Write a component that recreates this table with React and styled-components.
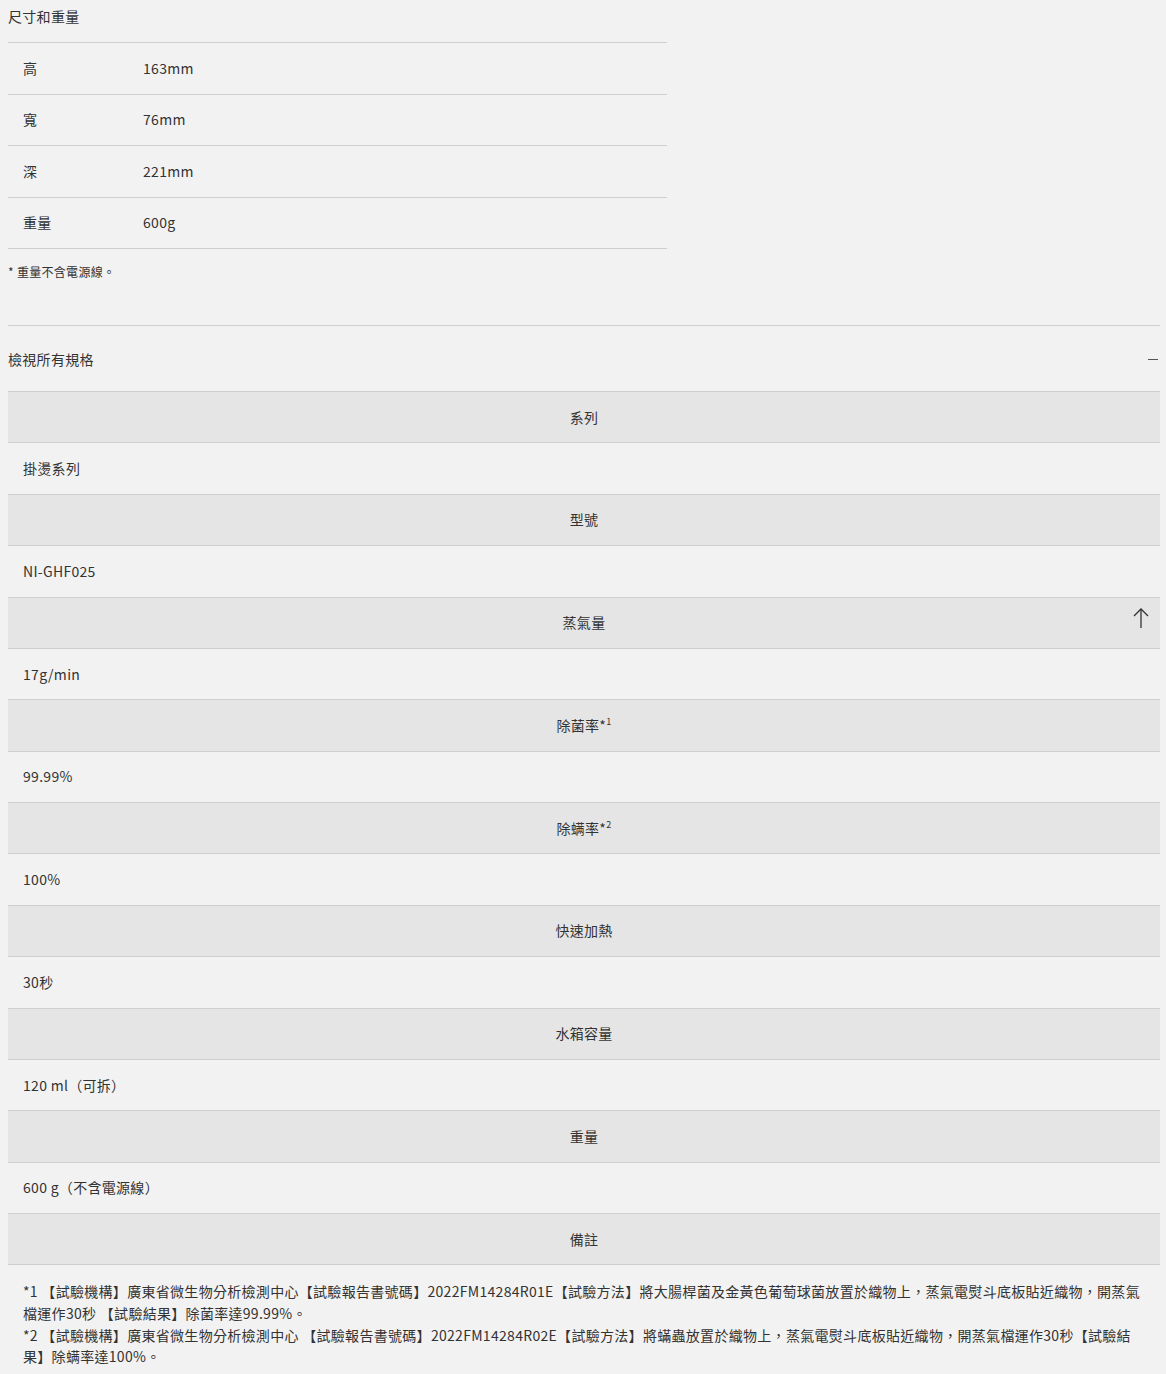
import styled, { createGlobalStyle } from "styled-components";

const GlobalStyle = createGlobalStyle`
  html, body {
    margin: 0;
    padding: 0;
    background: #f2f2f2;
  }
  body {
    font-family: "Noto Sans CJK TC", "Noto Sans", sans-serif;
    font-size: 14px;
    letter-spacing: 0.3px;
    color: #333;
  }
`;

const Page = styled.div`
  position: relative;
  width: 1152px;
  padding: 0 0 0 8px;
`;

const Title = styled.div`
  line-height: 21px;
  padding: 6px 0 15px;
  border-bottom: 1px solid #cfcfcf;
`;

const DimTable = styled.div`
  width: 659px;
`;

const DimRow = styled.div`
  display: grid;
  grid-template-columns: 120px 1fr;
  line-height: 21px;
  padding: 14.75px 15px;
  border-bottom: 1px solid #cfcfcf;
`;

const Note = styled.div`
  font-size: 12px;
  line-height: 18px;
  padding: 14px 0 44px;
  border-bottom: 1px solid #cfcfcf;
`;

const Toggle = styled.div`
  display: flex;
  justify-content: space-between;
  align-items: center;
  line-height: 21px;
  padding: 23px 0 21px;
  border-bottom: 1px solid #cfcfcf;
`;

const Minus = styled.span`
  width: 10px;
  height: 1px;
  background: #555;
  margin-right: 2px;
`;

const SpecRow = styled.div`
  line-height: 21px;
  padding: 14.7px 15px;
  border-bottom: 1px solid #cfcfcf;
  background: ${(p) => (p.head ? "#e5e5e5" : "transparent")};
  text-align: ${(p) => (p.head ? "center" : "left")};
`;

const Sup = styled.sup`
  font-size: 9px;
  line-height: 0;
  vertical-align: 6px;
`;

const Footnotes = styled.div`
  padding: 16px 15px 8px;
  line-height: 21.7px;
`;

const ToTop = styled.div`
  position: absolute;
  left: 1127px;
  top: 604px;
  width: 28px;
  height: 28px;
  display: flex;
  align-items: center;
  justify-content: center;
`;

const dims = [
  ["高", "163mm"],
  ["寬", "76mm"],
  ["深", "221mm"],
  ["重量", "600g"],
];

const specs = [
  [<>系列</>, "掛燙系列"],
  [<>型號</>, "NI-GHF025"],
  [<>蒸氣量</>, "17g/min"],
  [<>除菌率*<Sup>1</Sup></>, "99.99%"],
  [<>除螨率*<Sup>2</Sup></>, "100%"],
  [<>快速加熱</>, "30秒"],
  [<>水箱容量</>, "120 ml（可拆）"],
  [<>重量</>, "600 g（不含電源線）"],
];

export default function App() {
  return (
    <>
      <GlobalStyle />
      <Page>
        <DimTable>
          <Title>尺寸和重量</Title>
          {dims.map(([k, v]) => (
            <DimRow key={k}>
              <span>{k}</span>
              <span>{v}</span>
            </DimRow>
          ))}
        </DimTable>
        <Note>* 重量不含電源線。</Note>
        <Toggle>
          <span>檢視所有規格</span>
          <Minus />
        </Toggle>
        {specs.map(([h, v], i) => (
          <div key={i}>
            <SpecRow head>{h}</SpecRow>
            <SpecRow>{v}</SpecRow>
          </div>
        ))}
        <SpecRow head>備註</SpecRow>
        <Footnotes>
          *1 【試驗機構】廣東省微生物分析檢測中心【試驗報告書號碼】2022FM14284R01E【試驗方法】將大腸桿菌及金黃色葡萄球菌放置於織物上，蒸氣電熨斗底板貼近織物，開蒸氣檔運作30秒 【試驗結果】除菌率達99.99%。
          <br />
          *2 【試驗機構】廣東省微生物分析檢測中心 【試驗報告書號碼】2022FM14284R02E【試驗方法】將蟎蟲放置於織物上，蒸氣電熨斗底板貼近織物，開蒸氣檔運作30秒【試驗結果】除螨率達100%。
        </Footnotes>
        <ToTop>
          <svg width="18" height="22" viewBox="0 0 18 22" fill="none" stroke="#333" strokeWidth="1.3">
            <path d="M9 2v19" />
            <path d="M2 9l7-7 7 7" />
          </svg>
        </ToTop>
      </Page>
    </>
  );
}
